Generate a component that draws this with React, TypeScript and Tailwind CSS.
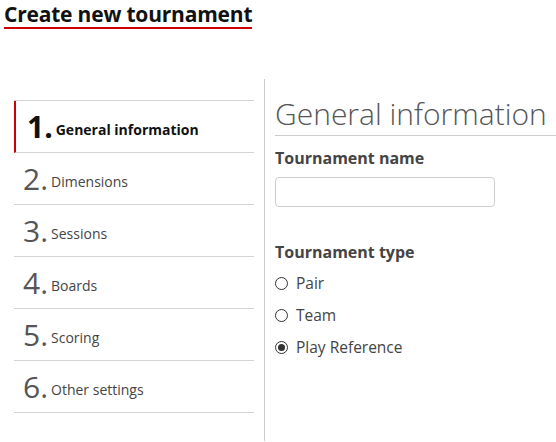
const steps = [
  { n: "1", label: "General information", active: true },
  { n: "2", label: "Dimensions" },
  { n: "3", label: "Sessions" },
  { n: "4", label: "Boards" },
  { n: "5", label: "Scoring" },
  { n: "6", label: "Other settings" },
];

const types = [
  { label: "Pair", checked: false },
  { label: "Team", checked: false },
  { label: "Play Reference", checked: true },
];

function Radio({ checked }: { checked: boolean }) {
  return (
    <span className="flex h-[13px] w-[13px] items-center justify-center rounded-full border border-[#333] bg-white">
      {checked && <span className="h-[7px] w-[7px] rounded-full bg-[#333]" />}
    </span>
  );
}

export default function App() {
  return (
    <div
      className="h-[442px] w-[556px] overflow-hidden bg-white text-[#333]"
      style={{ fontFamily: "'Open Sans', sans-serif" }}
    >
      {/* TITLE */}
      <div className="px-[4px] pt-[1px]">
        <h1 className="inline-block border-b-2 border-[#cc0000] text-[21px] font-bold leading-[26px] tracking-[-0.2px] text-[#111]">
          Create new tournament
        </h1>
      </div>

      <div className="mt-[50px] flex">
        {/* STEPS */}
        <div className="w-[264px] pl-[14px] pr-[10px] pt-[21px]">
          <ul className="border-t border-[#d4d4d4]">
            {steps.map((s) => (
              <li
                key={s.n}
                className={`flex h-[52px] items-center border-b border-[#d4d4d4] ${
                  s.active ? "border-l-2 border-l-[#cc0000] pl-[11px]" : "pl-[9px]"
                }`}
              >
                <span
                  className={`text-[30px] leading-none ${
                    s.active ? "font-bold text-[#111]" : "text-[#555]"
                  }`}
                >
                  {s.n}.
                </span>
                <span
                  className={`ml-[3px] mt-[6px] text-[14px] ${
                    s.active ? "font-bold text-[#111]" : "text-[#444]"
                  }`}
                >
                  {s.label}
                </span>
              </li>
            ))}
          </ul>
        </div>

        {/* FORM */}
        <div className="min-h-[362px] flex-1 border-l border-[#ccc] pl-[10px]">
          <h2 className="mt-[16px] border-b border-[#ccc] pb-[2px] text-[30px] font-light leading-[38px] text-[#555]">
            General information
          </h2>
          <label className="mt-[11px] block text-[16px] font-bold leading-[22px] text-[#444]">
            Tournament name
          </label>
          <input
            type="text"
            className="mt-[8px] block h-[30px] w-[220px] rounded-[4px] border border-[#ccc] px-2 text-[14px]"
          />
          <div className="mt-[34px] text-[16px] font-bold leading-[22px] text-[#444]">
            Tournament type
          </div>
          <div className="mt-[9px] flex flex-col gap-[10px]">
            {types.map((t) => (
              <label key={t.label} className="flex items-center gap-[8px] text-[15.5px] leading-[22px] text-[#444]">
                <Radio checked={t.checked} />
                {t.label}
              </label>
            ))}
          </div>
        </div>
      </div>
    </div>
  );
}
